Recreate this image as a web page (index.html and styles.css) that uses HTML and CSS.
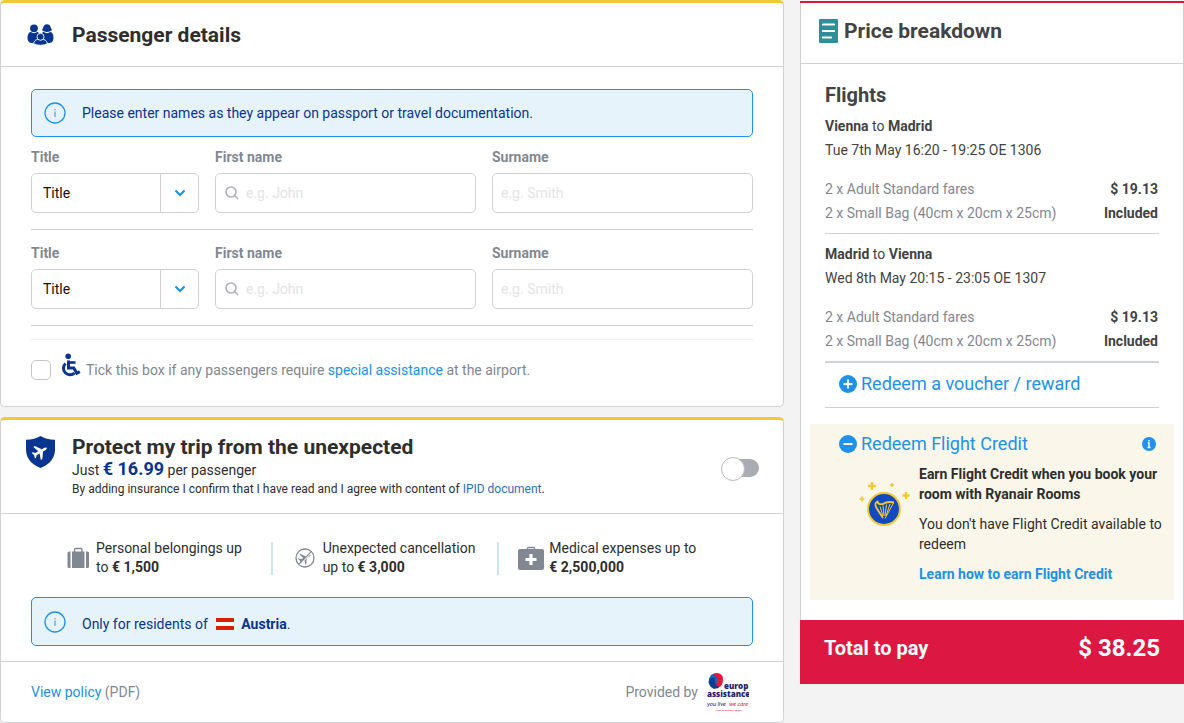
FILE: index.html
```
<!DOCTYPE html>
<html lang="en">
<head>
  <meta charset="UTF-8">
  <meta name="viewport" content="width=device-width, initial-scale=1.0">
  <title>Passenger details</title>
  <link rel="stylesheet" href="styles.css">
</head>
<body>
  <div class="page">
    <main class="main">
      <!-- Passengers -->
      <section class="card">
        <header class="card-header">
          <svg class="header-icon" width="30" height="24" viewBox="0 0 30 24" fill="#073590">
            <circle cx="9" cy="5.300" r="3.900"/>
            <path d="M17 7 L18.300 4.500 Q19 1.300 22 1.300 Q25 1.300 25.700 4.500 L27 7 Q25 9 22 9 Q19 9 17 7Z"/>
            <path d="M5.500 8.800 Q9 11.500 12.500 8.800 Q15 10 15.300 13 V20 Q10 21 5.500 19.800 Q2.500 19 2.500 14.500 Q2.500 10.500 5.500 8.800Z"/>
            <path d="M25.500 8.800 Q22 11.500 18.500 8.800 Q16 10 15.300 13 V20 Q20 21 25.500 19.800 Q28.500 19 28.500 14.500 Q28.500 10.500 25.500 8.800Z"/>
            <path d="M8.500 20.500 Q9.500 16 15.500 16 Q21.500 16 22.500 20.500 Q20 22.300 15.500 22.300 Q11 22.300 8.500 20.500Z" stroke="#fff" stroke-width="0.900"/>
            <circle cx="15.500" cy="13.800" r="3.500" stroke="#fff" stroke-width="0.900"/>
          </svg>
          <h2>Passenger details</h2>
        </header>
        <form class="passengers">
          <div class="notice">
            <svg class="notice-icon" width="22" height="22" viewBox="0 0 22 22" fill="none" stroke="#2091eb">
              <circle cx="11" cy="11" r="10" stroke-width="1.300"/>
              <path d="M11 9.500V15M11 7V8.300"/>
            </svg>
            <p>Please enter names as they appear on passport or travel documentation.</p>
          </div>

          <div class="passenger">
            <div class="field">
              <label for="title1">Title</label>
              <div class="select">
                <select id="title1"><option>Title</option><option>Mr</option><option>Mrs</option><option>Ms</option></select>
                <span class="arrow"><svg width="12" height="8" viewBox="0 0 12 8" fill="none" stroke="#2091eb" stroke-width="2.200"><path d="M1.500 1.500L6 6L10.500 1.500"/></svg></span>
              </div>
            </div>
            <div class="field">
              <label for="first1">First name</label>
              <div class="textbox">
                <svg width="16" height="16" viewBox="0 0 16 16" fill="none" stroke="#b0b3b8" stroke-width="1.700"><circle cx="7" cy="7" r="5"/><path d="M10.500 10.500L14 14"/></svg>
                <input type="text" id="first1" placeholder="e.g. John">
              </div>
            </div>
            <div class="field">
              <label for="surname1">Surname</label>
              <div class="textbox"><input type="text" id="surname1" placeholder="e.g. Smith"></div>
            </div>
          </div>

          <div class="passenger">
            <div class="field">
              <label for="title2">Title</label>
              <div class="select">
                <select id="title2"><option>Title</option><option>Mr</option><option>Mrs</option><option>Ms</option></select>
                <span class="arrow"><svg width="12" height="8" viewBox="0 0 12 8" fill="none" stroke="#2091eb" stroke-width="2.200"><path d="M1.500 1.500L6 6L10.500 1.500"/></svg></span>
              </div>
            </div>
            <div class="field">
              <label for="first2">First name</label>
              <div class="textbox">
                <svg width="16" height="16" viewBox="0 0 16 16" fill="none" stroke="#b0b3b8" stroke-width="1.700"><circle cx="7" cy="7" r="5"/><path d="M10.500 10.500L14 14"/></svg>
                <input type="text" id="first2" placeholder="e.g. John">
              </div>
            </div>
            <div class="field">
              <label for="surname2">Surname</label>
              <div class="textbox"><input type="text" id="surname2" placeholder="e.g. Smith"></div>
            </div>
          </div>

          <div class="assistance">
            <input type="checkbox" id="assistance">
            <svg class="wheelchair" width="20" height="26" viewBox="0 0 20 26" fill="none" stroke="#073590">
              <circle cx="7.200" cy="3.300" r="2.800" fill="#073590" stroke="none"/>
              <path d="M7.500 7.500V15H12.800L15.800 20.300L18.800 18.600" stroke-width="3"/>
              <path d="M7.500 9.500H14.500" stroke-width="2.600"/>
              <path d="M4.500 10.500A6.500 6.500 0 1 0 13.600 20" stroke-width="3"/>
            </svg>
            <label for="assistance">Tick this box if any passengers require <a href="#">special assistance</a> at the airport.</label>
          </div>
        </form>
      </section>

      <!-- Insurance -->
      <section class="card">
        <header class="card-header insurance-header">
          <svg class="header-icon" width="30" height="34" viewBox="0 0 30 34">
            <path d="M15.500 1 Q21 4.500 30 4.700 V15 Q29.500 27.500 15.500 33 Q1.500 27.500 1 15 V4.700 Q10 4.500 15.500 1Z" fill="#073590"/>
            <g transform="translate(15.500 16.500) rotate(60) scale(0.880)" fill="#fff">
              <path d="M-1.500 -6 Q0 -10.500 1.500 -6 V-2.500 L8.500 2.500 V4.500 L1.500 2 V6 L3.800 8.200 V9.500 L0 8.300 L-3.800 9.500 V8.200 L-1.500 6 V2 L-8.500 4.500 V2.500 L-1.500 -2.500Z"/>
            </g>
          </svg>
          <div class="insurance-text">
            <h2>Protect my trip from the unexpected</h2>
            <p class="insurance-price">Just <strong>€ 16.99</strong> per passenger</p>
            <p class="small">By adding insurance I confirm that I have read and I agree with content of <a href="#">IPID document</a>.</p>
          </div>
          <input type="checkbox" class="toggle" role="switch" aria-label="Add insurance">
        </header>

        <div class="benefits">
          <div class="benefit">
            <svg width="28" height="28" viewBox="0 0 28 28" fill="#828891">
              <path d="M10.500 9V6.500Q10.500 5.500 11.500 5.500H17Q18 5.500 18 6.500V9" fill="none" stroke="#828891" stroke-width="1.300"/>
              <path d="M5 8.500H6.500V25H5Q3.500 25 3.500 23.500V10Q3.500 8.500 5 8.500ZM8 8.500H20.500V25H8ZM22 8.500H23.500Q25 8.500 25 10V23.500Q25 25 23.500 25H22Z"/>
            </svg>
            <p>Personal belongings up to <strong>€ 1,500</strong></p>
          </div>
          <div class="benefit">
            <svg width="28" height="28" viewBox="0 0 28 28">
              <circle cx="14" cy="15" r="9" fill="none" stroke="#828891" stroke-width="1.300"/>
              <g transform="translate(14 15) rotate(60)" fill="#828891">
                <path d="M-1 -5 Q0 -8 1 -5 V-1.500 L6 2 V3 L1 1.500 V4 L3 5.700 V6.500 L0 5.700 L-3 6.500 V5.700 L-1 4 V1.500 L-6 3 V2 L-1 -1.500Z"/>
              </g>
              <path d="M20.500 9.500L8.500 21.500" stroke="#fff" stroke-width="1.300"/>
              <path d="M20.300 8.700L7.700 21.300" stroke="#828891" stroke-width="1.200"/>
            </svg>
            <p>Unexpected cancellation up to <strong>€ 3,000</strong></p>
          </div>
          <div class="benefit">
            <svg width="28" height="28" viewBox="0 0 28 28">
              <path d="M10 6.500L11 4.500H17L18 6.500" fill="none" stroke="#828891" stroke-width="1.300"/>
              <rect x="1" y="6" width="26" height="21" rx="2" fill="#828891"/>
              <path d="M14 11V22M8.500 16.500H19.500" stroke="#fff" stroke-width="3.200"/>
            </svg>
            <p>Medical expenses up to <strong>€ 2,500,000</strong></p>
          </div>
        </div>

        <div class="notice residents">
          <svg class="notice-icon" width="22" height="22" viewBox="0 0 22 22" fill="none" stroke="#2091eb">
            <circle cx="11" cy="11" r="10" stroke-width="1.300"/>
            <path d="M11 9.500V15M11 7V8.300"/>
          </svg>
          <p>Only for residents of <span class="flag"></span><strong>Austria</strong>.</p>
        </div>

        <footer class="card-footer">
          <p><a href="#">View policy</a> (PDF)</p>
          <p class="provider">Provided by
            <svg width="42" height="40" viewBox="0 0 42 40" role="img" aria-label="europ assistance">
              <path d="M4 3 Q8 0 12 3 Q14 10 7 17 Q2 15 1.500 10 Q1.500 6 4 3Z" fill="#1268b3"/>
              <path d="M6 2 Q12 -1 15.500 4 Q17 10 14 14 Q11 17 6 16 Q11 11 10 7 Q10 4 6 2Z" fill="#e4173d"/>
              <path d="M2 8 Q2 14 7 16.500 Q11 17 12 15 Q7 13 7.500 6 Q4 5 2 8Z" fill="#0b3d91"/>
              <text x="17" y="17" class="brand">europ</text>
              <text x="0" y="25" class="brand">assistance</text>
              <text x="0" y="34" class="motto">you live</text>
              <text x="22" y="34" class="motto red">we care</text>
              <text x="9" y="39" class="tiny red">PART OF GENERALI GROUP</text>
            </svg>
          </p>
        </footer>
      </section>
    </main>

    <!-- Price breakdown -->
    <aside class="summary">
      <header class="summary-header">
        <svg width="20" height="24" viewBox="0 0 20 24">
          <rect x="0" y="0" width="19" height="24" rx="1" fill="#2e8f98"/>
          <path d="M4 5.500H15M4 12H15M4 18.500H12" stroke="#fff" stroke-width="2.200" stroke-linecap="round"/>
        </svg>
        <h2>Price breakdown</h2>
      </header>

      <div class="summary-body">
        <h3>Flights</h3>
        <div class="flight">
          <p><strong>Vienna</strong> to <strong>Madrid</strong></p>
          <p>Tue 7th May 16:20 - 19:25 OE 1306</p>
          <table>
            <tr><td>2 x Adult Standard fares</td><th>$ 19.13</th></tr>
            <tr><td>2 x Small Bag (40cm x 20cm x 25cm)</td><th>Included</th></tr>
          </table>
        </div>
        <div class="flight">
          <p><strong>Madrid</strong> to <strong>Vienna</strong></p>
          <p>Wed 8th May 20:15 - 23:05 OE 1307</p>
          <table>
            <tr><td>2 x Adult Standard fares</td><th>$ 19.13</th></tr>
            <tr><td>2 x Small Bag (40cm x 20cm x 25cm)</td><th>Included</th></tr>
          </table>
        </div>
        <div class="voucher">
          <button type="button" class="redeem">
            <svg width="18" height="18" viewBox="0 0 18 18"><circle cx="9" cy="9" r="9" fill="#2091eb"/><path d="M9 4.500V13.500M4.500 9H13.500" stroke="#fff" stroke-width="1.800"/></svg>
            Redeem a voucher / reward
          </button>
        </div>
      </div>

      <div class="credit">
        <div class="credit-title">
          <button type="button" class="redeem">
            <svg width="18" height="18" viewBox="0 0 18 18"><circle cx="9" cy="9" r="9" fill="#2091eb"/><path d="M4.500 9H13.500" stroke="#fff" stroke-width="2"/></svg>
            Redeem Flight Credit
          </button>
          <button type="button" class="info" aria-label="About Flight Credit">
            <svg width="14" height="14" viewBox="0 0 14 14"><circle cx="7" cy="7" r="7" fill="#2091eb"/><path d="M7 3V4.500M5.800 6H7V10.500M5.500 10.500H8.500" stroke="#fff" stroke-width="1.400" fill="none"/></svg>
          </button>
        </div>
        <div class="credit-content">
          <svg width="52" height="48" viewBox="0 0 52 48">
            <path d="M13 1V9M9 5H17M47 11V18M43.500 14.500H50.500" stroke="#f1c933" stroke-width="2.400"/>
            <path d="M33 2V6M31 4H35M3 15.500V20.500M0.500 18H5.500" stroke="#f1c933" stroke-width="1.600"/>
            <circle cx="25" cy="28" r="16" fill="#1049c0" stroke="#f1c933" stroke-width="2"/>
            <path d="M24 37L17.500 27Q15 22 18.500 20.500Q19 24 24 23Q28 20 35 21.500" fill="none" stroke="#f1c933" stroke-width="1.800"/>
            <path d="M21 25.500L24 35M24 24.500L25 35M27.500 23.500L26 35M31 23L27 35M34.500 22L26 37.500" stroke="#f1c933" stroke-width="1"/>
          </svg>
          <div class="credit-text">
            <p><strong>Earn Flight Credit when you book your room with Ryanair Rooms</strong></p>
            <p>You don't have Flight Credit available to redeem</p>
            <p><a href="#">Learn how to earn Flight Credit</a></p>
          </div>
        </div>
      </div>

      <div class="total">
        <span>Total to pay</span>
        <strong>$ 38.25</strong>
      </div>
    </aside>
  </div>
</body>
</html>
```
FILE: styles.css
```
* {
  box-sizing: border-box;
}
body {
  margin: 0;
  background: #f3f3f3;
  color: #2e2e2e;
  font-family: Roboto, "Liberation Sans", sans-serif;
  font-size: 14px;
  line-height: 20px;
}
h2, h3, p {
  margin: 0;
}
h2 {
  font-size: 21px;
  line-height: 24px;
}
h3 {
  font-size: 20px;
  line-height: 24px;
}
strong, th {
  font-weight: 700;
}
a {
  color: #2091eb;
  text-decoration: none;
}
svg {
  flex: none;
  display: block;
}
button {
  border: 0;
  padding: 0;
  background: none;
  font-family: inherit;
  cursor: pointer;
}
.page {
  display: grid;
  grid-template-columns: 1fr 384px;
  align-items: start;
  gap: 16px;
}
.main {
  display: flex;
  flex-direction: column;
  gap: 10px;
}
.card {
  background: #fff;
  border: 1px solid #d0d3d6;
  border-top: 3px solid #f1c933;
  border-radius: 5px;
}
.card-header {
  display: flex;
  align-items: center;
  gap: 17px;
  padding: 20px 24px 19px;
  border-bottom: 1px solid #d0d3d6;
}
.header-icon {
  width: 30px;
}
/* Passenger form */
.passengers {
  padding: 22px 30px 26px;
}
.notice {
  display: flex;
  align-items: center;
  gap: 16px;
  min-height: 48px;
  padding: 0 12px;
  background: #e7f3fb;
  border: 1px solid #2091eb;
  border-radius: 5px;
  color: #073590;
}
.passenger {
  display: grid;
  grid-template-columns: 168px 1fr 1fr;
  gap: 16px;
  margin-top: 15px;
  padding-bottom: 16px;
  border-bottom: 1px solid #d0d3d6;
}
.notice + .passenger {
  margin-top: 12px;
}
.field label {
  display: block;
  margin-bottom: 8px;
  line-height: 16px;
  font-weight: 700;
  color: #828891;
}
.select, .textbox {
  display: flex;
  align-items: center;
  height: 40px;
  border: 1px solid #cfd1d4;
  border-radius: 5px;
  background: #fff;
}
.select {
  position: relative;
}
.select select {
  appearance: none;
  width: 100%;
  height: 100%;
  padding: 0 11px;
  border: 0;
  background: none;
  font: inherit;
  color: #111;
}
.arrow {
  position: absolute;
  top: 0;
  right: 0;
  bottom: 0;
  width: 38px;
  display: flex;
  align-items: center;
  justify-content: center;
  border-left: 1px solid #cfd1d4;
  pointer-events: none;
}
.textbox {
  gap: 6px;
  padding: 0 8px;
}
.textbox input {
  flex: 1;
  min-width: 0;
  height: 100%;
  padding: 0;
  border: 0;
  background: none;
  font: inherit;
}
.textbox input::placeholder {
  color: #e2e4e6;
}
.assistance {
  display: flex;
  align-items: center;
  margin-top: 13px;
  padding-top: 12px;
  border-top: 1px solid #ececee;
  color: #828891;
}
.assistance input {
  appearance: none;
  width: 20px;
  height: 20px;
  margin: 8px 10px 0 0;
  border: 1px solid #c3c6ca;
  border-radius: 5px;
  background: #fff;
}
.assistance input:checked {
  background: #2091eb;
}
.assistance label {
  padding-top: 8px;
}
.wheelchair {
  margin-right: 5px;
}
/* Insurance */
.insurance-header {
  align-items: flex-start;
  padding: 15px 24px 14px;
}
.insurance-text {
  flex: 1;
}
.insurance-price strong {
  font-size: 18px;
  color: #073590;
}
.small {
  font-size: 12px;
  line-height: 19px;
}
.small a {
  color: #2d6fb7;
}
.toggle {
  appearance: none;
  align-self: center;
  position: relative;
  width: 36px;
  height: 18px;
  margin: 2px 0 0;
  border-radius: 9px;
  background: #a9acb2;
}
.toggle::before {
  content: "";
  position: absolute;
  top: -2px;
  left: -2px;
  width: 22px;
  height: 22px;
  border: 1px solid #b5b8bc;
  border-radius: 50%;
  background: #fff;
}
.toggle:checked::before {
  left: 16px;
}
.benefits {
  display: grid;
  grid-template-columns: repeat(3, 1fr);
  padding: 25px 59px 20px 43px;
}
.benefit {
  display: flex;
  align-items: flex-start;
  gap: 4px;
  padding-left: 20px;
}
.benefit p {
  max-width: 160px;
  line-height: 19px;
}
.benefit strong {
  white-space: nowrap;
}
.benefit svg {
  margin-top: 4px;
}
.benefit + .benefit {
  background: linear-gradient(#cde4f7, #cde4f7) left 3px / 2px 33px no-repeat;
}
.residents {
  margin: 0 30px 15px;
  min-height: 49px;
}
.residents p {
  padding-top: 4px;
}
.flag {
  display: inline-block;
  width: 18px;
  height: 12px;
  margin: 0 7px 0 5px;
  vertical-align: -1px;
  background: linear-gradient(#d81e05 33%, #fff 33%, #fff 67%, #d81e05 67%);
}
.card-footer {
  display: flex;
  justify-content: space-between;
  align-items: center;
  padding: 10px 34px 10px 30px;
  border-top: 1px solid #d0d3d6;
  color: #828891;
}
.provider {
  display: flex;
  align-items: center;
  gap: 9px;
}
.brand {
  font: 900 9px "Open Sans", sans-serif;
  font-size: 8px;
  fill: #1d2472;
}
.motto {
  font: italic 6px Lato, sans-serif;
  fill: #1d2472;
}
.tiny {
  font: 700 2px Lato, sans-serif;
}
.red {
  fill: #e4173d;
}
/* Price breakdown */
.summary {
  margin-top: 1px;
  background: #fff;
  border-top: 2px solid #dc1842;
  color: #434343;
}
.summary-header {
  display: flex;
  align-items: center;
  gap: 5px;
  padding: 16px 19px 20px 18px;
  border: solid #d0d3d6;
  border-width: 0 1px 1px;
}
.summary-body {
  padding: 19px 24px 16px;
  border: solid #d0d3d6;
  border-width: 0 1px;
}
.summary h3 {
  margin-bottom: 7px;
}
.flight {
  padding-bottom: 8px;
  border-bottom: 1px solid #d0d3d6;
  line-height: 24px;
}
.flight + .flight {
  padding-top: 8px;
  border-bottom-width: 2px;
}
.flight table {
  width: 100%;
  margin-top: 15px;
  border-collapse: collapse;
}
.flight td, .flight th {
  padding: 0;
  text-align: left;
}
.flight td {
  color: #828891;
}
.flight th {
  padding-right: 1px;
  text-align: right;
}
.voucher {
  padding: 9px 14px 11px;
  border-bottom: 1px solid #d0d3d6;
}
.redeem {
  display: flex;
  align-items: center;
  gap: 4px;
  font-size: 18px;
  line-height: 24px;
  color: #2091eb;
}
.credit {
  padding: 0 9px 20px;
  border: solid #d0d3d6;
  border-width: 0 1px;
}
.credit-title, .credit-content {
  display: flex;
  background: #faf6ea;
}
.credit-title {
  justify-content: space-between;
  align-items: center;
  padding: 8px 18px 0 29px;
}
.credit-content {
  gap: 8px;
  padding: 8px 8px 16px 49px;
}
.credit-content svg {
  margin-top: 17px;
}
.credit-text {
  color: #2e2e2e;
}
.credit-text p {
  margin-bottom: 10px;
}
.credit-text p:last-child {
  margin-bottom: 0;
}
.credit-text a {
  font-weight: 700;
}
.total {
  display: flex;
  justify-content: space-between;
  align-items: center;
  padding: 15px 24px 23px;
  background: #dc1842;
  color: #fff;
  font-size: 20px;
  line-height: 26px;
  font-weight: 700;
}
.total strong {
  font-size: 24px;
}
```
